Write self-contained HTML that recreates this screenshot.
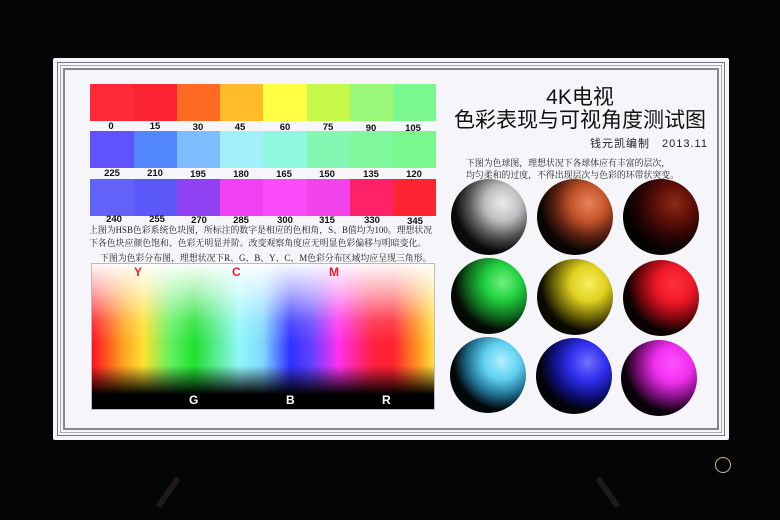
<!DOCTYPE html>
<html><head><meta charset="utf-8"><style>
*{margin:0;padding:0;box-sizing:border-box}
body{width:780px;height:520px;background:#060506;position:relative;overflow:hidden;font-family:"Liberation Sans","Noto Sans CJK SC",sans-serif}
.scr{position:absolute;left:53px;top:58px;width:676px;height:382px;background:#f6f6fa;border-radius:2px}
.f{position:absolute;border:1px solid #77737a}
.blk{position:absolute;height:37px}
.lbl{position:absolute;font-size:9.5px;font-weight:bold;color:#111;width:40px;text-align:center}
.cn{position:absolute;font-family:"Liberation Serif","Noto Serif CJK SC",serif;font-size:8.9px;color:#222;white-space:nowrap}
.sp{position:absolute;width:76px;height:76px;border-radius:50%}
.dl{position:absolute;font-size:12px;font-weight:bold}
</style></head><body>
<div class="scr">
 <div class="f" style="left:4px;top:4px;right:4px;bottom:4px"></div>
 <div class="f" style="left:7px;top:7px;right:7px;bottom:7px;border-color:#aaa"></div>
 <div class="f" style="left:10px;top:10px;right:10px;bottom:10px;border-width:2px;border-color:#8a8690"></div>
</div>
<div style="position:absolute;left:0;top:0">
<div class="blk" style="left:90px;top:84px;width:44px;background:#ff2a38"></div>
<div class="blk" style="left:134px;top:84px;width:43px;background:#fb2233"></div>
<div class="blk" style="left:177px;top:84px;width:43px;background:#ff6a22"></div>
<div class="blk" style="left:220px;top:84px;width:43px;background:#ffbc28"></div>
<div class="blk" style="left:263px;top:84px;width:44px;background:#ffff44"></div>
<div class="blk" style="left:307px;top:84px;width:43px;background:#c6f84a"></div>
<div class="blk" style="left:350px;top:84px;width:43px;background:#9cf878"></div>
<div class="blk" style="left:393px;top:84px;width:43px;background:#7af88e"></div>

<div class="blk" style="left:90px;top:131px;width:44px;background:#6052ff"></div>
<div class="blk" style="left:134px;top:131px;width:43px;background:#5286ff"></div>
<div class="blk" style="left:177px;top:131px;width:43px;background:#7cbcff"></div>
<div class="blk" style="left:220px;top:131px;width:43px;background:#a2f0fa"></div>
<div class="blk" style="left:263px;top:131px;width:44px;background:#90f8e0"></div>
<div class="blk" style="left:307px;top:131px;width:43px;background:#82f8b2"></div>
<div class="blk" style="left:350px;top:131px;width:43px;background:#80f89c"></div>
<div class="blk" style="left:393px;top:131px;width:43px;background:#7af890"></div>

<div class="blk" style="left:90px;top:179px;width:44px;background:#6262f8"></div>
<div class="blk" style="left:134px;top:179px;width:43px;background:#5a58f8"></div>
<div class="blk" style="left:177px;top:179px;width:43px;background:#9042f2"></div>
<div class="blk" style="left:220px;top:179px;width:43px;background:#f040f4"></div>
<div class="blk" style="left:263px;top:179px;width:44px;background:#fa4cfa"></div>
<div class="blk" style="left:307px;top:179px;width:43px;background:#f242ea"></div>
<div class="blk" style="left:350px;top:179px;width:43px;background:#ff2268"></div>
<div class="blk" style="left:393px;top:179px;width:43px;background:#ff2433"></div>
</div>
<div class="lbl" style="left:91px;top:121px">0</div><div class="lbl" style="left:135px;top:121px">15</div><div class="lbl" style="left:178px;top:122px">30</div><div class="lbl" style="left:220px;top:122px">45</div><div class="lbl" style="left:265px;top:122px">60</div><div class="lbl" style="left:308px;top:122px">75</div><div class="lbl" style="left:351px;top:123px">90</div><div class="lbl" style="left:393px;top:123px">105</div>
<div class="lbl" style="left:92px;top:168px">225</div><div class="lbl" style="left:135px;top:168px">210</div><div class="lbl" style="left:178px;top:169px">195</div><div class="lbl" style="left:221px;top:169px">180</div><div class="lbl" style="left:264px;top:169px">165</div><div class="lbl" style="left:307px;top:169px">150</div><div class="lbl" style="left:351px;top:169px">135</div><div class="lbl" style="left:394px;top:169px">120</div>
<div class="lbl" style="left:94px;top:214px">240</div><div class="lbl" style="left:137px;top:214px">255</div><div class="lbl" style="left:179px;top:215px">270</div><div class="lbl" style="left:221px;top:215px">285</div><div class="lbl" style="left:265px;top:215px">300</div><div class="lbl" style="left:307px;top:215px">315</div><div class="lbl" style="left:352px;top:215px">330</div><div class="lbl" style="left:395px;top:216px">345</div>
<div class="cn" style="left:89px;top:223px">上图为HSB色彩系统色块图，所标注的数字是相应的色相角，S、B值均为100。理想状况</div>
<div class="cn" style="left:89px;top:236px">下各色块应颜色饱和、色彩无明显并阶。改变观察角度应无明显色彩偏移与明暗变化。</div>
<div class="cn" style="left:100px;top:251px">下图为色彩分布图，理想状况下R、G、B、Y、C、M色彩分布区域均应呈现三角形。</div>
<div style="position:absolute;left:91px;top:263px;width:344px;height:147px;border:1px solid #bbb;overflow:hidden;background:linear-gradient(90deg,#ff1020 0%,#ffa020 9%,#ffe030 15%,#60f060 23%,#20e030 30%,#90f8f8 43%,#80d8ff 50%,#3030ff 58%,#6040ff 64%,#ff30f0 72%,#ff2040 82%,#ff2030 88%,#ff9020 95%,#ffe040 100%)">
 <div style="position:absolute;inset:0;background:linear-gradient(180deg,rgba(255,255,255,.97) 0%,rgba(255,255,255,.6) 20%,rgba(255,255,255,.15) 40%,rgba(255,255,255,0) 55%,rgba(0,0,0,0) 70%,rgba(0,0,0,.6) 82%,#000 90%)"></div>
</div>
<div class="dl" style="left:134px;top:265px;color:#e02030">Y</div>
<div class="dl" style="left:232px;top:265px;color:#e02030">C</div>
<div class="dl" style="left:329px;top:265px;color:#e02030">M</div>
<div class="dl" style="left:189px;top:393px;color:#fff">G</div>
<div class="dl" style="left:286px;top:393px;color:#fff">B</div>
<div class="dl" style="left:382px;top:393px;color:#fff">R</div>
<div style="position:absolute;left:445px;top:86px;width:270px;text-align:center;font-size:21px;line-height:23px;color:#111">4K电视<br><span style="font-size:21px">色彩表现与可视角度测试图</span></div>
<div style="position:absolute;left:590px;top:135px;font-size:11px;color:#222;letter-spacing:1px;white-space:nowrap">钱元凯编制　2013.11</div>
<div class="cn" style="left:466px;top:156px">下图为色球图，理想状况下各球体应有丰富的层次，</div>
<div class="cn" style="left:466px;top:168px">均匀柔和的过度，不得出现层次与色彩的环带状突变。</div>
<div class="sp" style="left:451px;top:179px;background:radial-gradient(circle 70px at 68% 32%,#ececee 0px,#bdbdbf 18px,#555 34px,#0a0a0a 48px)"></div>
<div class="sp" style="left:537px;top:179px;background:radial-gradient(circle 70px at 68% 32%,#e8845a 0px,#c4542a 18px,#5a2010 34px,#0a0505 48px)"></div>
<div class="sp" style="left:623px;top:179px;background:radial-gradient(circle 70px at 68% 32%,#8a2a18 0px,#601008 18px,#2a0505 34px,#050202 48px)"></div>
<div class="sp" style="left:451px;top:258px;background:radial-gradient(circle 70px at 68% 32%,#70f080 0px,#20d040 18px,#107020 34px,#050a05 48px)"></div>
<div class="sp" style="left:537px;top:259px;background:radial-gradient(circle 70px at 68% 32%,#f8f060 0px,#e0d020 18px,#706808 34px,#0a0a02 48px)"></div>
<div class="sp" style="left:623px;top:260px;background:radial-gradient(circle 70px at 68% 32%,#ff3040 0px,#f01828 18px,#800810 34px,#0a0202 48px)"></div>
<div class="sp" style="left:450px;top:337px;background:radial-gradient(circle 70px at 68% 32%,#b0f0ff 0px,#60d0f0 18px,#207090 34px,#02080a 48px)"></div>
<div class="sp" style="left:536px;top:338px;background:radial-gradient(circle 70px at 68% 32%,#7070ff 0px,#3030f0 18px,#101080 34px,#02020a 48px)"></div>
<div class="sp" style="left:621px;top:340px;background:radial-gradient(circle 70px at 68% 32%,#ff50ff 0px,#f030f0 18px,#801080 34px,#0a020a 48px)"></div>
<div style="position:absolute;left:715px;top:457px;width:16px;height:16px;border:1.5px solid #c8b8a0;border-radius:50%"></div>
<div style="position:absolute;left:165px;top:475px;width:6px;height:35px;background:#1e1a18;transform:rotate(35deg)"></div>
<div style="position:absolute;left:605px;top:475px;width:6px;height:35px;background:#1e1a18;transform:rotate(-35deg)"></div>
</body></html>
